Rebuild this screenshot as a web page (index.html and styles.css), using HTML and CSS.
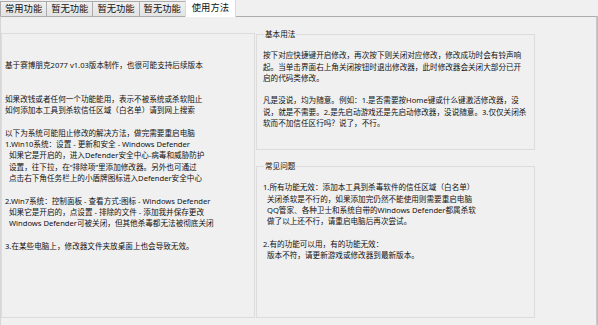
FILE: index.html
```html
<!DOCTYPE html>
<html lang="zh-CN">
<head>
    <meta charset="UTF-8">
    <title>使用方法</title>
    <link rel="stylesheet" href="styles.css">
</head>
<body>
    <div class="tabs">
        <div class="tab">常用功能</div>
        <div class="tab">暂无功能</div>
        <div class="tab">暂无功能</div>
        <div class="tab">暂无功能</div>
        <div class="tab active">使用方法</div>
    </div>

    <div class="page">
        <div class="info-panel">
            <div class="line">基于赛博朋克2077 v1.03版本制作，也很可能支持后续版本</div>
            <div class="blank"></div>
            <div class="blank"></div>
            <div class="line">如果改钱或者任何一个功能能用，表示不被系统或杀软阻止</div>
            <div class="line">如何添加本工具到杀软信任区域（白名单）请到网上搜索</div>
            <div class="blank"></div>
            <div class="line">以下为系统可能阻止修改的解决方法，做完需要重启电脑</div>
            <div class="line">1.Win10系统：设置 - 更新和安全 - Windows Defender</div>
            <div class="line indent">如果它是开启的，进入Defender安全中心-病毒和威胁防护</div>
            <div class="line indent">设置，往下拉，在“排除项”里添加修改器。另外也可通过</div>
            <div class="line indent">点击右下角任务栏上的小盾牌图标进入Defender安全中心</div>
            <div class="blank"></div>
            <div class="line">2.Win7系统：控制面板 - 查看方式:图标 - Windows Defender</div>
            <div class="line indent">如果它是开启的，点设置 - 排除的文件 - 添加我并保存更改</div>
            <div class="line indent">Windows Defender可被关闭，但其他杀毒都无法被彻底关闭</div>
            <div class="blank"></div>
            <div class="line">3.在某些电脑上，修改器文件夹放桌面上也会导致无效。</div>
        </div>

        <div class="side">
            <fieldset class="group">
                <legend>基本用法</legend>
                <div class="line">按下对应快捷键开启修改，再次按下则关闭对应修改，修改成功时会有铃声响</div>
                <div class="line">起。当单击界面右上角关闭按钮时退出修改器，此时修改器会关闭大部分已开</div>
                <div class="line">启的代码类修改。</div>
                <div class="blank"></div>
                <div class="line">凡是没说，均为随意。例如：1.是否需要按Home键或什么键激活修改器，没</div>
                <div class="line">说，就是不需要。2.是先启动游戏还是先启动修改器，没说随意。3.仅仅关闭杀</div>
                <div class="line">软而不加信任区行吗？说了，不行。</div>
            </fieldset>

            <fieldset class="group grow">
                <legend>常见问题</legend>
                <div class="line">1.所有功能无效：添加本工具到杀毒软件的信任区域（白名单）</div>
                <div class="line indent">关闭杀软是不行的，如果添加完仍然不能使用则需要重启电脑</div>
                <div class="line indent">QQ管家、各种卫士和系统自带的Windows Defender都属杀软</div>
                <div class="line indent">做了以上还不行，请重启电脑后再次尝试。</div>
                <div class="blank"></div>
                <div class="line">2.有的功能可以用，有的功能无效：</div>
                <div class="line indent">版本不符，请更新游戏或修改器到最新版本。</div>
            </fieldset>
        </div>
    </div>
</body>
</html>
```

FILE: styles.css
```css
body {
    margin: 0;
    width: 598px;
    height: 325px;
    background: #f0f0f0;
    font-family: "Noto Sans", "Noto Sans CJK SC", sans-serif;
    color: #111;
    overflow: hidden;
}

.tabs {
    display: flex;
    align-items: flex-end;
    height: 16px;
}

.tab {
    height: 14px;
    line-height: 14px;
    padding: 0 4px;
    font-size: 9.3px;
    border: 1px solid #acacac;
    border-bottom: none;
    background: linear-gradient(#f0f0f0, #e3e3e3);
    margin-right: -1px;
    white-space: nowrap;
}

.tab.active {
    height: 17px;
    line-height: 16px;
    background: #ffffff;
    padding: 0 6px;
    position: relative;
    z-index: 1;
    margin-bottom: -1px;
    border-color: #d9d9d9;
}

.page {
    width: 595px;
    height: 302px;
    border: 1px solid #d6d6d6;
    border-top-color: #acacac;
    border-right-color: #c8c8c8;
    box-shadow: 1px 0 0 #9fc3ee;
    display: flex;
    padding-top: 16px;
}

.line {
    font-size: 7.6px;
    line-height: 11.3px;
    height: 11.3px;
    white-space: nowrap;
}

.blank {
    height: 11.3px;
}

.indent {
    padding-left: 4px;
}

.info-panel {
    width: 249px;
    height: 257px;
    border: 1px solid #dcdcdc;
    padding: 26px 0 0 3px;
    margin-right: 1px;
}

.side {
    width: 279px;
    height: 289px;
    display: flex;
    flex-direction: column;
    margin-top: -4px;
}

.group {
    margin: 0;
    padding: 10px 6px 0 6px;
    border: 1px solid #dcdcdc;
    height: 121px;
    box-sizing: border-box;
}

.group legend {
    font-size: 7.6px;
    line-height: 11.3px;
    padding: 0 1px;
    margin-left: 1px;
}

.group.grow {
    margin-top: 11px;
    flex: 1;
}
```
